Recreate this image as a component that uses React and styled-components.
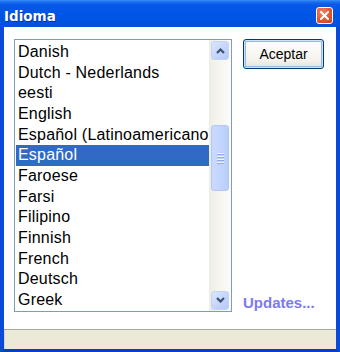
import styled, { createGlobalStyle } from 'styled-components';

const GlobalStyle = createGlobalStyle`
  html, body {
    margin: 0;
    padding: 0;
    background: #fff;
  }
  body {
    font-family: "Liberation Sans", Arial, sans-serif;
  }
`

const languages = [
  'Danish',
  'Dutch - Nederlands',
  'eesti',
  'English',
  'Español (Latinoamericano)',
  'Español',
  'Faroese',
  'Farsi',
  'Filipino',
  'Finnish',
  'French',
  'Deutsch',
  'Greek',
]

/* Window shell */
const Window = styled.div`
  width: 340px;
  height: 352px;
  display: flex;
  flex-direction: column;
  overflow: hidden;
`

const TitleBar = styled.div`
  height: 27px;
  flex: none;
  box-sizing: border-box;
  padding: 4px 7px 0 4px;
  display: flex;
  align-items: center;
  justify-content: space-between;
  background: linear-gradient(to bottom,
    #3d8ff5 0px, #1a6cf0 2px, #0858e8 5px, #0055e6 14px, #0053e2 22px, #0a4fd8 27px);
`

const Title = styled.span`
  font-family: "DejaVu Sans", sans-serif;
  font-weight: bold;
  font-size: 13.5px;
  color: #fff;
  text-shadow: 1px 1px 0 #0c2f9e;
`

const CloseButton = styled.div`
  width: 17px;
  height: 17px;
  box-sizing: border-box;
  border: 1px solid #fff;
  border-radius: 3px;
  background: radial-gradient(circle at 35% 30%, #f08466 0%, #e0572f 55%, #c63e1c 100%);
  display: flex;
  align-items: center;
  justify-content: center;
`

const Frame = styled.div`
  flex: 1;
  display: flex;
  flex-direction: column;
  border: 4px solid #0a4ad8;
  border-top: none;
  border-bottom-color: #0a3bc9;
  box-shadow: inset 1px 0 0 #1565ec, inset -1px 0 0 #1565ec;
`

const Client = styled.div`
  flex: 1;
  background: #fff;
  display: flex;
  padding: 12px 0 17px 10px;
`

/* List box */
const ListBox = styled.div`
  width: 218px;
  box-sizing: border-box;
  border: 1px solid #7f9db9;
  display: flex;
  overflow: hidden;
`

const Items = styled.div`
  flex: 1;
  min-width: 0;
  padding: 2px 0 0 1px;
`

const Item = styled.div`
  height: 20.67px;
  line-height: 20.67px;
  padding-left: 2px;
  font-size: 16px;
  letter-spacing: 0.2px;
  white-space: nowrap;
  overflow: hidden;
  color: ${p => (p.$selected ? '#fff' : '#000')};
  background: ${p => (p.$selected ? '#316ac5' : 'transparent')};
`

/* XP scrollbar */
const ScrollTrack = styled.div`
  width: 22px;
  flex: none;
  box-sizing: border-box;
  padding: 1px 2px 1px 2px;
  display: flex;
  flex-direction: column;
  background: linear-gradient(to right, #eeede5 0%, #f5f4ef 40%, #fbfbf8 100%);
`

const ScrollButton = styled.div`
  height: 19px;
  flex: none;
  box-sizing: border-box;
  border: 1px solid #c4d4f7;
  border-radius: 3px;
  background: linear-gradient(135deg, #dce7fd 0%, #c6d7fc 50%, #b4c9f8 100%);
  display: flex;
  align-items: center;
  justify-content: center;
`

const Thumb = styled.div`
  height: 66px;
  margin-top: ${p => p.$offset}px;
  flex: none;
  box-sizing: border-box;
  border: 1px solid #b2c7f5;
  border-radius: 3px;
  background: linear-gradient(to right, #cad9fd 0%, #c3d5fd 50%, #b9cdf9 100%);
  display: flex;
  flex-direction: column;
  align-items: center;
  justify-content: center;
  gap: 1px;
`

const Grip = styled.div`
  width: 7px;
  height: 1px;
  background: #eef3fe;
  box-shadow: 0 1px 0 #8faaea;
  margin-bottom: 1px;
`

const Spacer = styled.div`
  flex: 1;
`

/* Right column */
const Side = styled.div`
  width: 93px;
  margin-left: 11px;
  display: flex;
  flex-direction: column;
  justify-content: space-between;
`

const Button = styled.button`
  width: 81px;
  height: 30px;
  box-sizing: border-box;
  border: 1px solid #003c74;
  border-radius: 3px;
  background: linear-gradient(to bottom, #fff 0%, #f4f3ee 70%, #e3e1d6 100%);
  box-shadow: inset 0 0 0 1px #cde3fd, inset 0 0 0 2px #98b8ea;
  font-family: "Liberation Sans", Arial, sans-serif;
  font-size: 14px;
  color: #000;
  padding: 0;
`

const Link = styled.span`
  font-size: 15px;
  font-weight: bold;
  color: #7b7aef;
  line-height: 18px;
  margin-bottom: 0;
`

const StatusBar = styled.div`
  height: 20px;
  flex: none;
  background: #ece9d8;
  box-shadow: inset 0 1px 0 #aca899, inset 1px 0 0 #d8d4c4;
`

const Chevron = ({ up }) => (
  <svg width="9" height="6" viewBox="0 0 9 6">
    <path
      d={up ? 'M1 5 L4.5 1.5 L8 5' : 'M1 1 L4.5 4.5 L8 1'}
      fill="none"
      stroke="#3e5278"
      strokeWidth="2.2"
    />
  </svg>
)

export default function App() {
  return (
    <>
      <GlobalStyle />
      <Window>
        <TitleBar>
          <Title>Idioma</Title>
          <CloseButton>
            <svg width="9" height="9" viewBox="0 0 9 9">
              <path d="M1 1 L8 8 M8 1 L1 8" stroke="#fff" strokeWidth="2" strokeLinecap="square" />
            </svg>
          </CloseButton>
        </TitleBar>
        <Frame>
          <Client>
            <ListBox>
              <Items>
                {languages.map((name, i) => (
                  <Item key={name} $selected={i === 5}>{name}</Item>
                ))}
              </Items>
              <ScrollTrack>
                <ScrollButton><Chevron up /></ScrollButton>
                <Thumb $offset={65}>
                  <Grip />
                  <Grip />
                  <Grip />
                  <Grip />
                </Thumb>
                <Spacer />
                <ScrollButton><Chevron /></ScrollButton>
              </ScrollTrack>
            </ListBox>
            <Side>
              <Button>Aceptar</Button>
              <Link>Updates...</Link>
            </Side>
          </Client>
          <StatusBar />
        </Frame>
      </Window>
    </>
  )
}
